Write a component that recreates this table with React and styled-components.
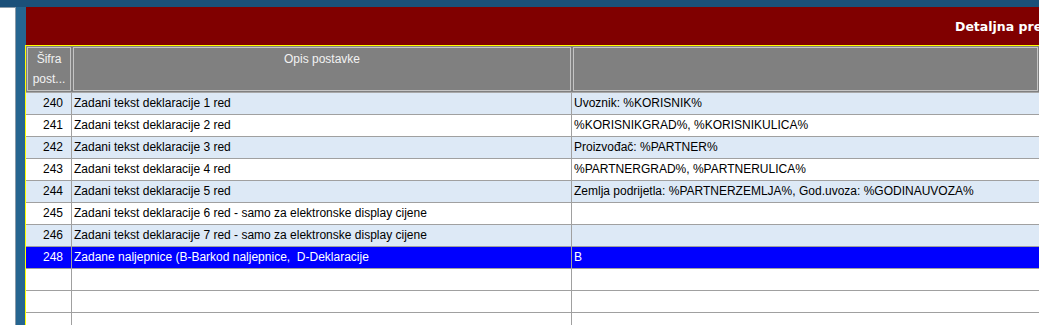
import React from "react";
import styled, { createGlobalStyle } from "styled-components";

const GlobalStyle = createGlobalStyle`
 html, body {
    margin: 0;
    padding: 0;
    overflow: hidden;
    background: #266590;
 }
 #root {
    height: 325px;
 }
`;

const Screen = styled.div`
 display: flex;
 flex-direction: column;
 height: 325px;
 font-family: "Liberation Sans", Arial, sans-serif;
 font-size: 12px;
`;

const TopStrip = styled.div`
 height: 7px;
 background: #1b5079;
 flex: none;
`;

const Body = styled.div`
 display: flex;
 flex: 1;
 min-height: 0;
 gap: 9px;
`;

const SidePanel = styled.div`
 width: 15px;
 background: #ffffff;
 border-top: 1px solid #8a9aa8;
 border-right: 1px solid #8a9aa8;
 flex: none;
`;

const Main = styled.div`
 flex: 1;
 min-width: 0;
 display: flex;
 flex-direction: column;
 overflow: hidden;
`;

const TitleBar = styled.div`
 height: 38px;
 margin-left: 1px;
 background: #800000;
 display: flex;
 align-items: center;
 padding-left: 929px;
 white-space: nowrap;
 overflow: hidden;
 color: #ffffff;
 font-family: "DejaVu Sans", Tahoma, sans-serif;
 font-weight: bold;
 font-size: 12.5px;
 flex: none;
`;

const Table = styled.div`
 flex: 1;
 border-top: 1px solid #ffff00;
 border-left: 1px solid #ffff00;
 background: #ffffff;
`;

const Grid = styled.div`
 display: grid;
 grid-template-columns: 46px 500px 1fr;
`;

const HeaderRow = styled(Grid)`
 height: 46px;
 background: #808080;
 border-bottom: 1px solid #a8a8a8;
`;

const HeaderCell = styled.div`
 box-shadow: inset 0 0 0 1px #808080, inset 0 0 0 2px #c4c4c4;
 color: #f2f2f2;
 text-align: center;
 line-height: 20px;
 padding-top: 3px;
 overflow: hidden;
`;

const Row = styled(Grid)`
 height: 21px;
 border-bottom: 1px solid #a0a0a0;
 background: ${(p) => (p.selected ? "#0000ff" : p.shaded ? "#dde9f6" : "#ffffff")};
 color: ${(p) => (p.selected ? "#ffffff" : "#000000")};
`;

const Cell = styled.div`
 border-right: 1px solid #a0a0a0;
 line-height: 21px;
 white-space: pre;
 overflow: hidden;
 padding: ${(p) => (p.num ? "0 8px 0 0" : "0 0 0 2px")};
 text-align: ${(p) => (p.num ? "right" : "left")};

 &:last-child {
    border-right: none;
 }
`;

const rows = [
 { id: 240, desc: "Zadani tekst deklaracije 1 red", value: "Uvoznik: %KORISNIK%" },
 { id: 241, desc: "Zadani tekst deklaracije 2 red", value: "%KORISNIKGRAD%, %KORISNIKULICA%" },
 { id: 242, desc: "Zadani tekst deklaracije 3 red", value: "Proizvođač: %PARTNER%" },
 { id: 243, desc: "Zadani tekst deklaracije 4 red", value: "%PARTNERGRAD%, %PARTNERULICA%" },
 {
    id: 244,
    desc: "Zadani tekst deklaracije 5 red",
    value: "Zemlja podrijetla: %PARTNERZEMLJA%, God.uvoza: %GODINAUVOZA%",
 },
 { id: 245, desc: "Zadani tekst deklaracije 6 red - samo za elektronske display cijene", value: "" },
 { id: 246, desc: "Zadani tekst deklaracije 7 red - samo za elektronske display cijene", value: "" },
 { id: 248, desc: "Zadane naljepnice (B-Barkod naljepnice,  D-Deklaracije", value: "B", selected: true },
];

const App = () => {
 return (
    <>
      <GlobalStyle />
      <Screen>
        <TopStrip />
        <Body>
          <SidePanel />
          <Main>
            <TitleBar>Detaljna pregled postavki</TitleBar>
            <Table>
              <HeaderRow>
                <HeaderCell>
                  Šifra
                  <br />
                  post...
                </HeaderCell>
                <HeaderCell>Opis postavke</HeaderCell>
                <HeaderCell />
              </HeaderRow>
              {rows.map((r, i) => (
                <Row key={r.id} shaded={i % 2 === 0} selected={r.selected}>
                  <Cell num>{r.id}</Cell>
                  <Cell>{r.desc}</Cell>
                  <Cell>{r.value}</Cell>
                </Row>
              ))}
              {[0, 1, 2].map((k) => (
                <Row key={"e" + k}>
                  <Cell num />
                  <Cell />
                  <Cell />
                </Row>
              ))}
            </Table>
          </Main>
        </Body>
      </Screen>
    </>
 );
};

export default App;
